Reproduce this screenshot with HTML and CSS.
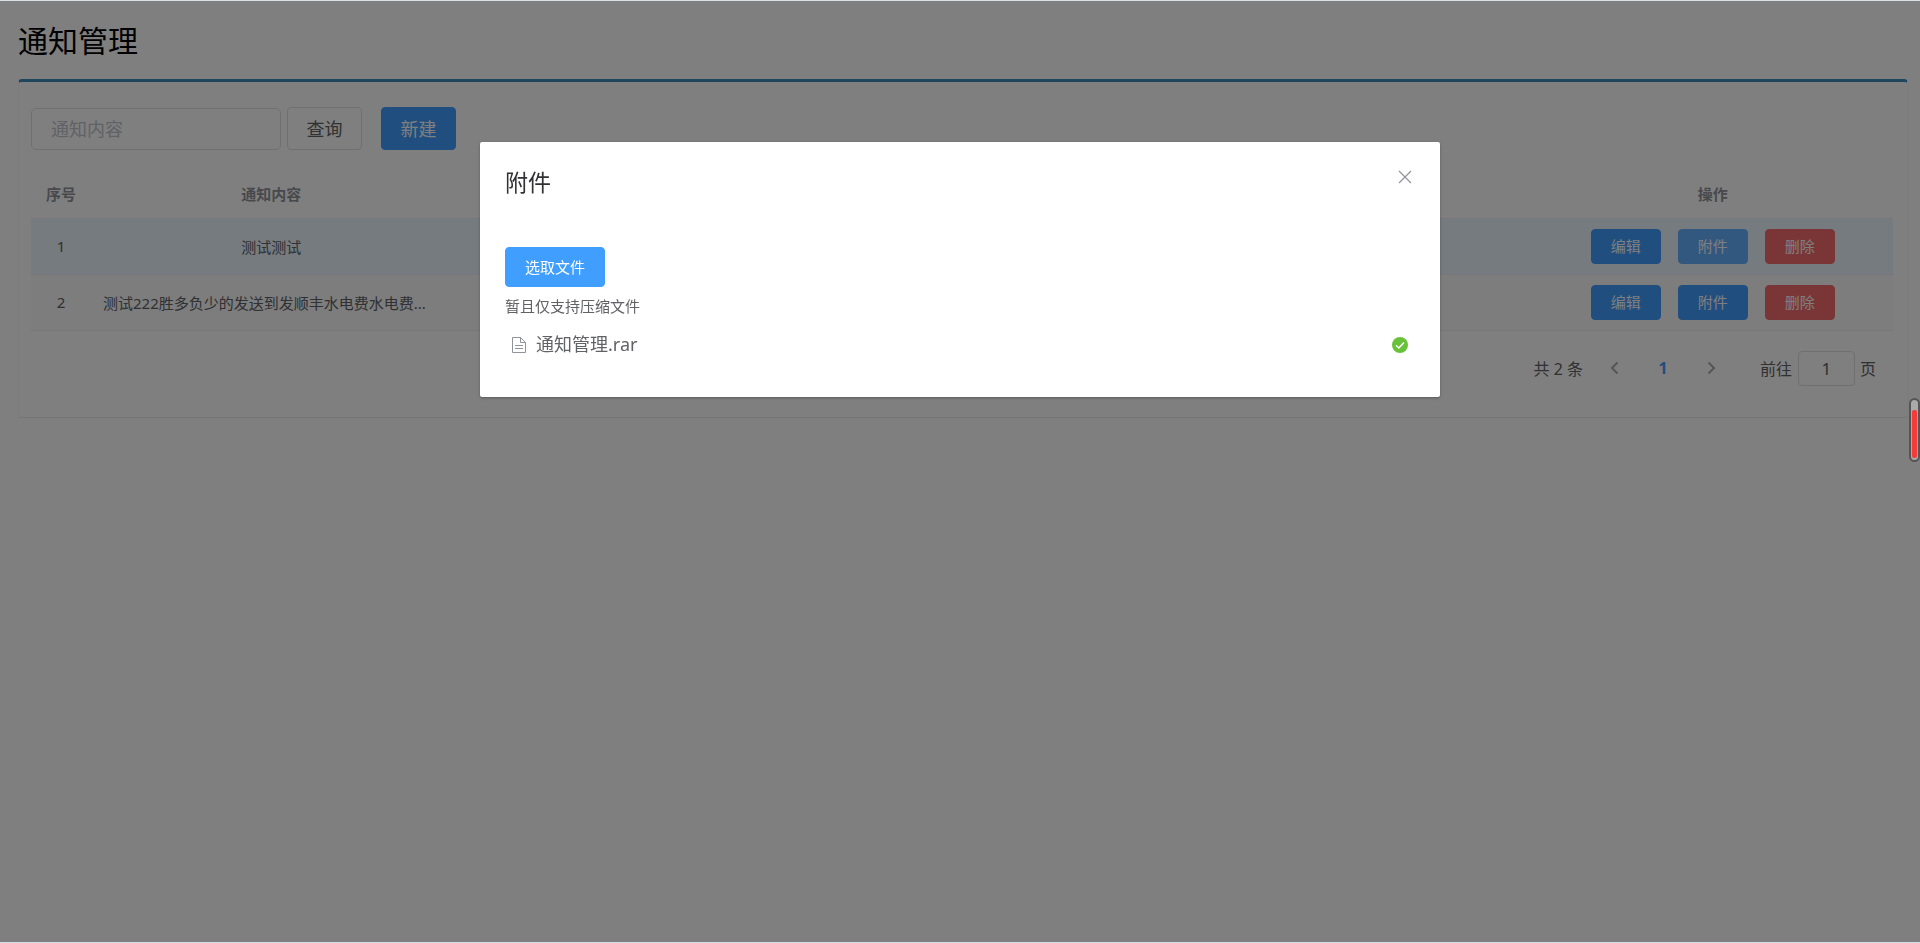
FILE: index.html
```
<!DOCTYPE html>
<html lang="zh-CN">
<head>
    <meta charset="UTF-8">
    <meta name="viewport" content="width=device-width, initial-scale=1.0">
    <title>通知管理</title>
    <link rel="stylesheet" href="styles.css">
</head>
<body>
    <main class="page">
        <h1>通知管理</h1>
        <section class="box">
            <form class="toolbar">
                <input type="text" class="search-input" placeholder="通知内容" aria-label="通知内容">
                <button type="button" class="btn btn-default">查询</button>
                <button type="button" class="btn btn-primary btn-new">新建</button>
            </form>

            <table class="notice-table">
                <colgroup>
                    <col class="col-index">
                    <col>
                    <col>
                    <col>
                    <col>
                    <col>
                </colgroup>
                <thead>
                    <tr>
                        <th>序号</th>
                        <th>通知内容</th>
                        <th></th>
                        <th></th>
                        <th></th>
                        <th>操作</th>
                    </tr>
                </thead>
                <tbody>
                    <tr class="current-row">
                        <td>1</td>
                        <td>测试测试</td>
                        <td></td>
                        <td></td>
                        <td></td>
                        <td>
                            <div class="actions">
                                <button type="button" class="btn btn-small btn-primary">编辑</button>
                                <button type="button" class="btn btn-small btn-primary active">附件</button>
                                <button type="button" class="btn btn-small btn-danger">删除</button>
                            </div>
                        </td>
                    </tr>
                    <tr class="striped">
                        <td>2</td>
                        <td class="long-text">测试222胜多负少的发送到发顺丰水电费水电费...</td>
                        <td></td>
                        <td></td>
                        <td></td>
                        <td>
                            <div class="actions">
                                <button type="button" class="btn btn-small btn-primary">编辑</button>
                                <button type="button" class="btn btn-small btn-primary">附件</button>
                                <button type="button" class="btn btn-small btn-danger">删除</button>
                            </div>
                        </td>
                    </tr>
                </tbody>
            </table>

            <nav class="pagination">
                <span class="total">共 2 条</span>
                <button type="button" class="pager" aria-label="上一页">
                    <svg width="16" height="16" viewBox="0 0 16 16"><path d="M10.500 2.500L5 8l5.500 5.500"/></svg>
                </button>
                <button type="button" class="pager current">1</button>
                <button type="button" class="pager" aria-label="下一页">
                    <svg width="16" height="16" viewBox="0 0 16 16"><path d="M5.500 2.500L11 8l-5.500 5.500"/></svg>
                </button>
                <label class="jump" for="jump">前往</label>
                <input type="text" id="jump" class="jump-input" value="1">
                <span class="jump-unit">页</span>
            </nav>
        </section>
    </main>

    <!-- Attachment dialog -->
    <div class="overlay">
        <div class="dialog" role="dialog" aria-labelledby="dialog-title">
            <header class="dialog-header">
                <h2 id="dialog-title">附件</h2>
                <button type="button" class="dialog-close" aria-label="关闭">
                    <svg width="16" height="16" viewBox="0 0 16 16"><path d="M2 2l12 12M14 2L2 14"/></svg>
                </button>
            </header>
            <div class="dialog-body">
                <button type="button" class="btn btn-primary btn-upload">选取文件</button>
                <p class="upload-tip">暂且仅支持压缩文件</p>
                <ul class="file-list">
                    <li>
                        <svg class="file-icon" width="16" height="18" viewBox="0 0 16 18"><path d="M1.500 1.500h8l5 5v10h-13zM9.500 1.500v5h5M4 9.500h8M4 12.500h8"/></svg>
                        <a href="#" class="file-name">通知管理.rar</a>
                        <svg class="file-done" width="16" height="16" viewBox="0 0 16 16"><circle cx="8" cy="8" r="8"/><path d="M4 8.300l2.800 2.700L12 5.500"/></svg>
                    </li>
                </ul>
            </div>
        </div>
    </div>

    <div class="side-meter"><span></span></div>
</body>
</html>
```
FILE: styles.css
```
* {
    box-sizing: border-box;
}

body {
    margin: 0;
    font-family: "Noto Sans", "Noto Sans CJK SC", sans-serif;
    font-size: 15px;
    color: #606266;
    background-color: #fff;
}

button,
input {
    font-family: inherit;
}

/* Page */
.page {
    padding: 19px 12px 0 18px;
}

h1 {
    margin: 0 0 16px;
    font-size: 30px;
    font-weight: 400;
    line-height: 44px;
    color: #000;
}

.box {
    padding: 25px 14px 31px 12px;
    border: 1px solid #fafafa;
    border-top: 3px solid #3c8dbc;
    border-bottom-color: #ebebeb;
    border-radius: 4px;
    box-shadow: 0 1px 1px rgba(0, 0, 0, 0.1);
}

/* Toolbar */
.toolbar {
    display: flex;
    align-items: center;
    gap: 6px;
    margin-bottom: 24px;
}

.search-input {
    width: 250px;
    height: 42px;
    padding: 0 19px;
    font-size: 18px;
    border: 1px solid #dcdfe6;
    border-radius: 5px;
}

.search-input::placeholder {
    color: #c0c4cc;
}

/* Buttons */
.btn {
    width: 75px;
    height: 43px;
    padding: 0;
    font-size: 18px;
    line-height: 1;
    border: 1px solid #dcdfe6;
    border-radius: 4px;
    cursor: pointer;
}

.btn-default {
    color: #606266;
    background-color: #fff;
}

.btn-primary {
    color: #fff;
    background-color: #409eff;
    border-color: #409eff;
}

.btn-primary.active {
    background-color: #66b1ff;
    border-color: #66b1ff;
}

.btn-danger {
    color: #fff;
    background-color: #f56c6c;
    border-color: #f56c6c;
}

.btn-new {
    margin-left: 13px;
}

.btn-small {
    width: 70px;
    height: 35px;
    font-size: 15px;
}

/* Table */
.notice-table {
    width: 100%;
    table-layout: fixed;
    border-collapse: collapse;
    text-align: center;
}

.col-index {
    width: 60px;
}

.notice-table th,
.notice-table td {
    padding: 0;
    border-bottom: 1px solid #ebeef5;
    white-space: nowrap;
}

.notice-table th {
    height: 44px;
    padding-bottom: 4px;
    font-weight: 700;
    color: #909399;
}

.notice-table td {
    height: 56px;
}

.notice-table .long-text {
    padding-left: 12px;
    text-align: left;
}

.current-row {
    background-color: #ebf7ff;
}

.striped {
    background-color: #fafafa;
}

.actions {
    display: flex;
    justify-content: center;
    gap: 17px;
}

/* Pagination */
.pagination {
    display: flex;
    justify-content: flex-end;
    align-items: center;
    margin-top: 20px;
    padding-right: 17px;
    font-size: 16px;
}

.total {
    margin-right: 8px;
}

.pager {
    width: 48px;
    height: 35px;
    padding: 0;
    font-size: 16px;
    font-weight: 700;
    color: #c0c4cc;
    background: none;
    border: none;
}

.pager.current {
    color: #409eff;
}

.pager svg {
    display: block;
    margin: 0 auto;
    fill: none;
    stroke: #a8abb2;
    stroke-width: 2;
}

.jump {
    margin-left: 25px;
    margin-right: 6px;
}

.jump-input {
    width: 57px;
    height: 35px;
    margin-right: 5px;
    font-size: 17px;
    text-align: center;
    color: #606266;
    border: 1px solid #dcdfe6;
    border-radius: 4px;
}

/* Dialog */
.overlay {
    position: fixed;
    inset: 0;
    padding-top: 15vh;
    background-color: rgba(0, 0, 0, 0.5);
    background-clip: padding-box;
    border-top: 1px solid #d9dfe3;
    border-bottom: 1px solid #cde0e6;
}

.dialog {
    width: 50%;
    margin: 0 auto;
    background-color: #fff;
    border-radius: 2px;
    box-shadow: 0 1px 3px rgba(0, 0, 0, 0.3);
}

.dialog-header {
    display: flex;
    justify-content: space-between;
    align-items: flex-start;
    padding: 25px 25px 12px;
}

.dialog-header h2 {
    margin: 0;
    font-size: 23px;
    font-weight: 400;
    line-height: 30px;
    color: #303133;
}

.dialog-close {
    padding: 2px;
    background: none;
    border: none;
    cursor: pointer;
}

.dialog-close svg {
    display: block;
    fill: none;
    stroke: #909399;
    stroke-width: 1.2;
}

.dialog-body {
    padding: 38px 25px;
}

.btn-upload {
    width: 100px;
    height: 40px;
    font-size: 15px;
}

.upload-tip {
    margin: 8px 0 0;
    line-height: 22px;
}

.file-list {
    margin: 13px 0 0;
    padding: 0;
    list-style: none;
}

.file-list li {
    display: flex;
    align-items: center;
    padding: 0 7px 0 6px;
    line-height: 29px;
}

.file-icon {
    margin-right: 9px;
    fill: none;
    stroke: #909399;
}

.file-name {
    font-size: 18px;
    color: #606266;
    text-decoration: none;
}

.file-done {
    margin-left: auto;
    fill: #67c23a;
}

.file-done path {
    fill: none;
    stroke: #fff;
    stroke-width: 1.5;
}

/* Floating meter on the window edge */
.side-meter {
    position: fixed;
    top: 398px;
    right: 0;
    width: 11px;
    height: 64px;
    padding: 10px 1px 2px;
    background-color: #aaa;
    border: 2px solid #555;
    border-radius: 6px;
}

.side-meter span {
    display: block;
    height: 100%;
    background-color: #f53b3b;
    border-radius: 2px;
}
```
